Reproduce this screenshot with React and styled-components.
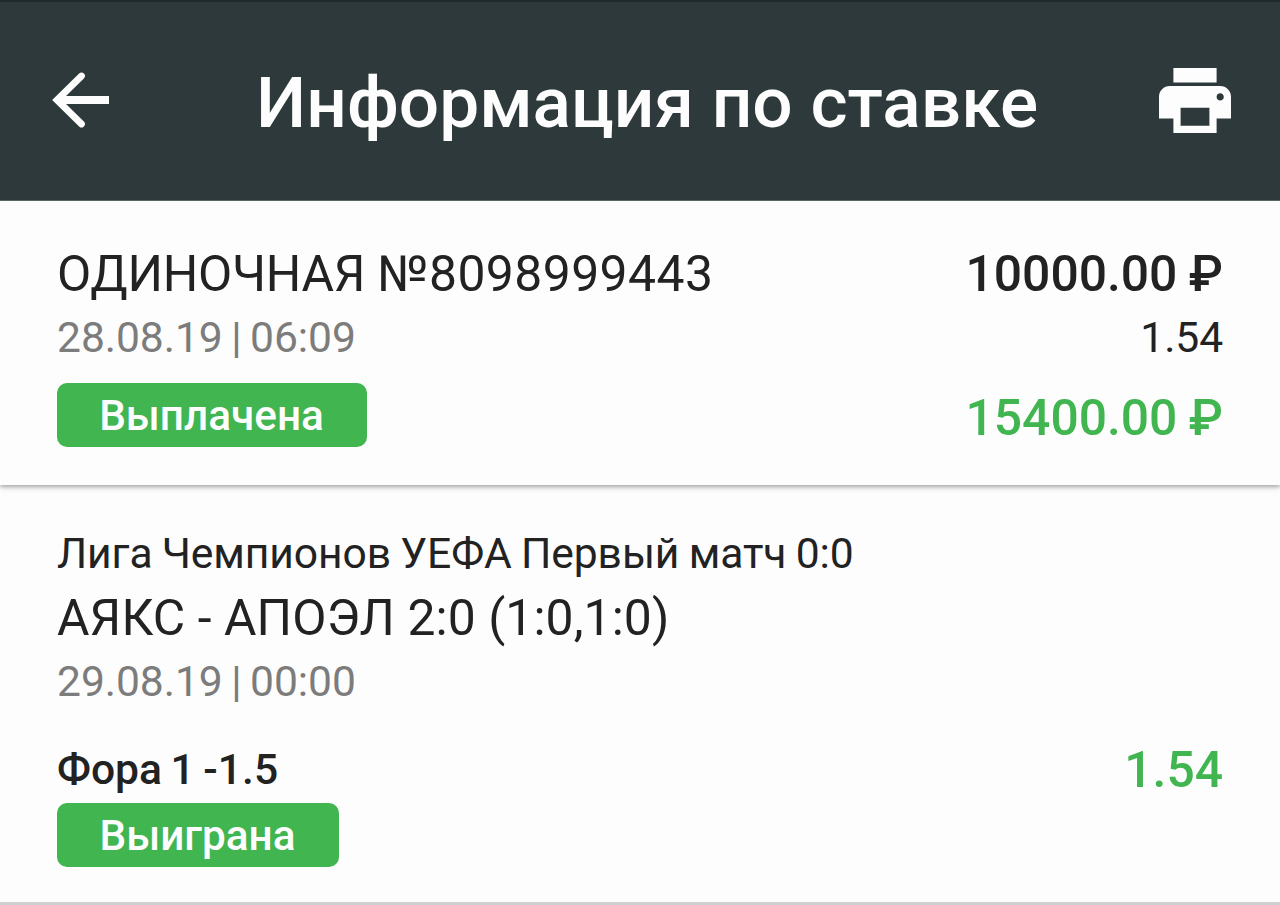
import React from 'react';
import styled, { createGlobalStyle } from 'styled-components';

const GlobalStyle = createGlobalStyle`
  body {
    margin: 0;
    background: #fdfdfd;
    font-family: Roboto, sans-serif;
    color: #222;
  }
`;

const Screen = styled.div`
  width: 1280px;
  height: 905px;
  overflow: hidden;
`;

const Header = styled.header`
  display: flex;
  align-items: center;
  box-sizing: border-box;
  height: 201px;
  padding: 0 49px 2px 50px;
  background: #2e393b;
  border-top: 2px solid #202a2c;
  border-bottom: 1px solid #5a6364;
  color: #fdfdfd;
`;

const Title = styled.h1`
  flex: 1;
  margin: 5px 0 0 144px;
  font-size: 71.2px;
  line-height: 80px;
  font-weight: 500;
  white-space: nowrap;
`;

const Card = styled.section`
  box-sizing: border-box;
  height: ${props => props.$height}px;
  padding: ${props => props.$top}px 57px 0;
  background: #fdfdfd;
`;

const Summary = styled(Card)`
  position: relative;
  box-shadow: 0 2px 4px rgba(0, 0, 0, 0.3), 0 4px 8px rgba(0, 0, 0, 0.06);
  clip-path: inset(0 0 -16px 0);
`;

const Bet = styled(Card)`
  border-bottom: 3px solid #cfcfcf;
`;

const Row = styled.div`
  display: flex;
  justify-content: space-between;
  align-items: center;
  height: ${props => props.$height || 64}px;
  margin-top: ${props => props.$gap || 0}px;
`;

const Small = styled.span`
  font-size: 42.6px;
  font-weight: ${props => props.$weight || 400};
  letter-spacing: ${props => props.$spacing || 0}px;
  word-spacing: ${props => props.$words || 0}px;
  padding-top: ${props => props.$drop || 0}px;
  color: ${props => props.$color || '#222'};
  white-space: nowrap;
`;

const Large = styled(Small)`
  font-size: 49.8px;
`;

const Badge = styled.span`
  display: flex;
  align-items: center;
  justify-content: center;
  box-sizing: border-box;
  width: ${props => props.$width}px;
  height: 64px;
  padding: 1px 1px 0 0;
  border-radius: 10px;
  background: #40b550;
  color: #fdfdfd;
  font-size: 42.3px;
  font-weight: 500;
`;

const GREEN = '#40b550';
const GREY = '#7c7c7c';

const BackIcon = () => (
  <svg width="62" height="62" viewBox="0 0 62 62" fill="none" stroke="#fdfdfd">
    <path d="M31.5 7 7 31 31.5 55" strokeWidth="6.8" strokeLinecap="round" />
    <path d="M8 31H59" strokeWidth="8" />
  </svg>
);

const PrintIcon = () => (
  <svg width="72" height="65" viewBox="2 3 20 18" fill="#fdfdfd">
    <path d="M19 8H5c-1.66 0-3 1.34-3 3v6h4v4h12v-4h4v-6c0-1.66-1.34-3-3-3zm-3 11H8v-5h8v5zm3-7c-.55 0-1-.45-1-1s.45-1 1-1 1 .45 1 1-.45 1-1 1zm-1-9H6v4h12V3z" />
  </svg>
);

const App = () => (
  <Screen>
    <GlobalStyle />
    <Header>
      <BackIcon />
      <Title>Информация по ставке</Title>
      <PrintIcon />
    </Header>

    <Summary $height={284} $top={40}>
      <Row>
        <Large $drop={2}>
          <Large $spacing={-0.25}>ОДИНОЧНАЯ </Large>
          <Large $spacing={0.45}>№8098999443</Large>
        </Large>
        <Large $weight={500} $words={-1} $drop={2}>10000.00 ₽</Large>
      </Row>
      <Row>
        <Small $color={GREY} $words={-2} $spacing={-0.05}>28.08.19 | 06:09</Small>
        <Small $spacing={-0.1}>1.54</Small>
      </Row>
      <Row $gap={14}>
        <Badge $width={310}>Выплачена</Badge>
        <Large $weight={500} $color={GREEN} $words={-1} $drop={6}>15400.00 ₽</Large>
      </Row>
    </Summary>

    <Bet $height={420} $top={36}>
      <Row>
        <Small $words={-1.2} $spacing={-0.08}>Лига Чемпионов УЕФА Первый матч 0:0</Small>
      </Row>
      <Row>
        <Large $spacing={0.1} $drop={2}>АЯКС - АПОЭЛ 2:0 (1:0,1:0)</Large>
      </Row>
      <Row>
        <Small $color={GREY} $words={-2} $spacing={-0.05}>29.08.19 | 00:00</Small>
      </Row>
      <Row $gap={24}>
        <Small $weight={500} $words={-2}>Фора 1 -1.5</Small>
        <Large $weight={500} $color={GREEN} $drop={1}>1.54</Large>
      </Row>
      <Row $gap={2}>
        <Badge $width={282}>Выиграна</Badge>
      </Row>
    </Bet>
  </Screen>
);

export default App;
